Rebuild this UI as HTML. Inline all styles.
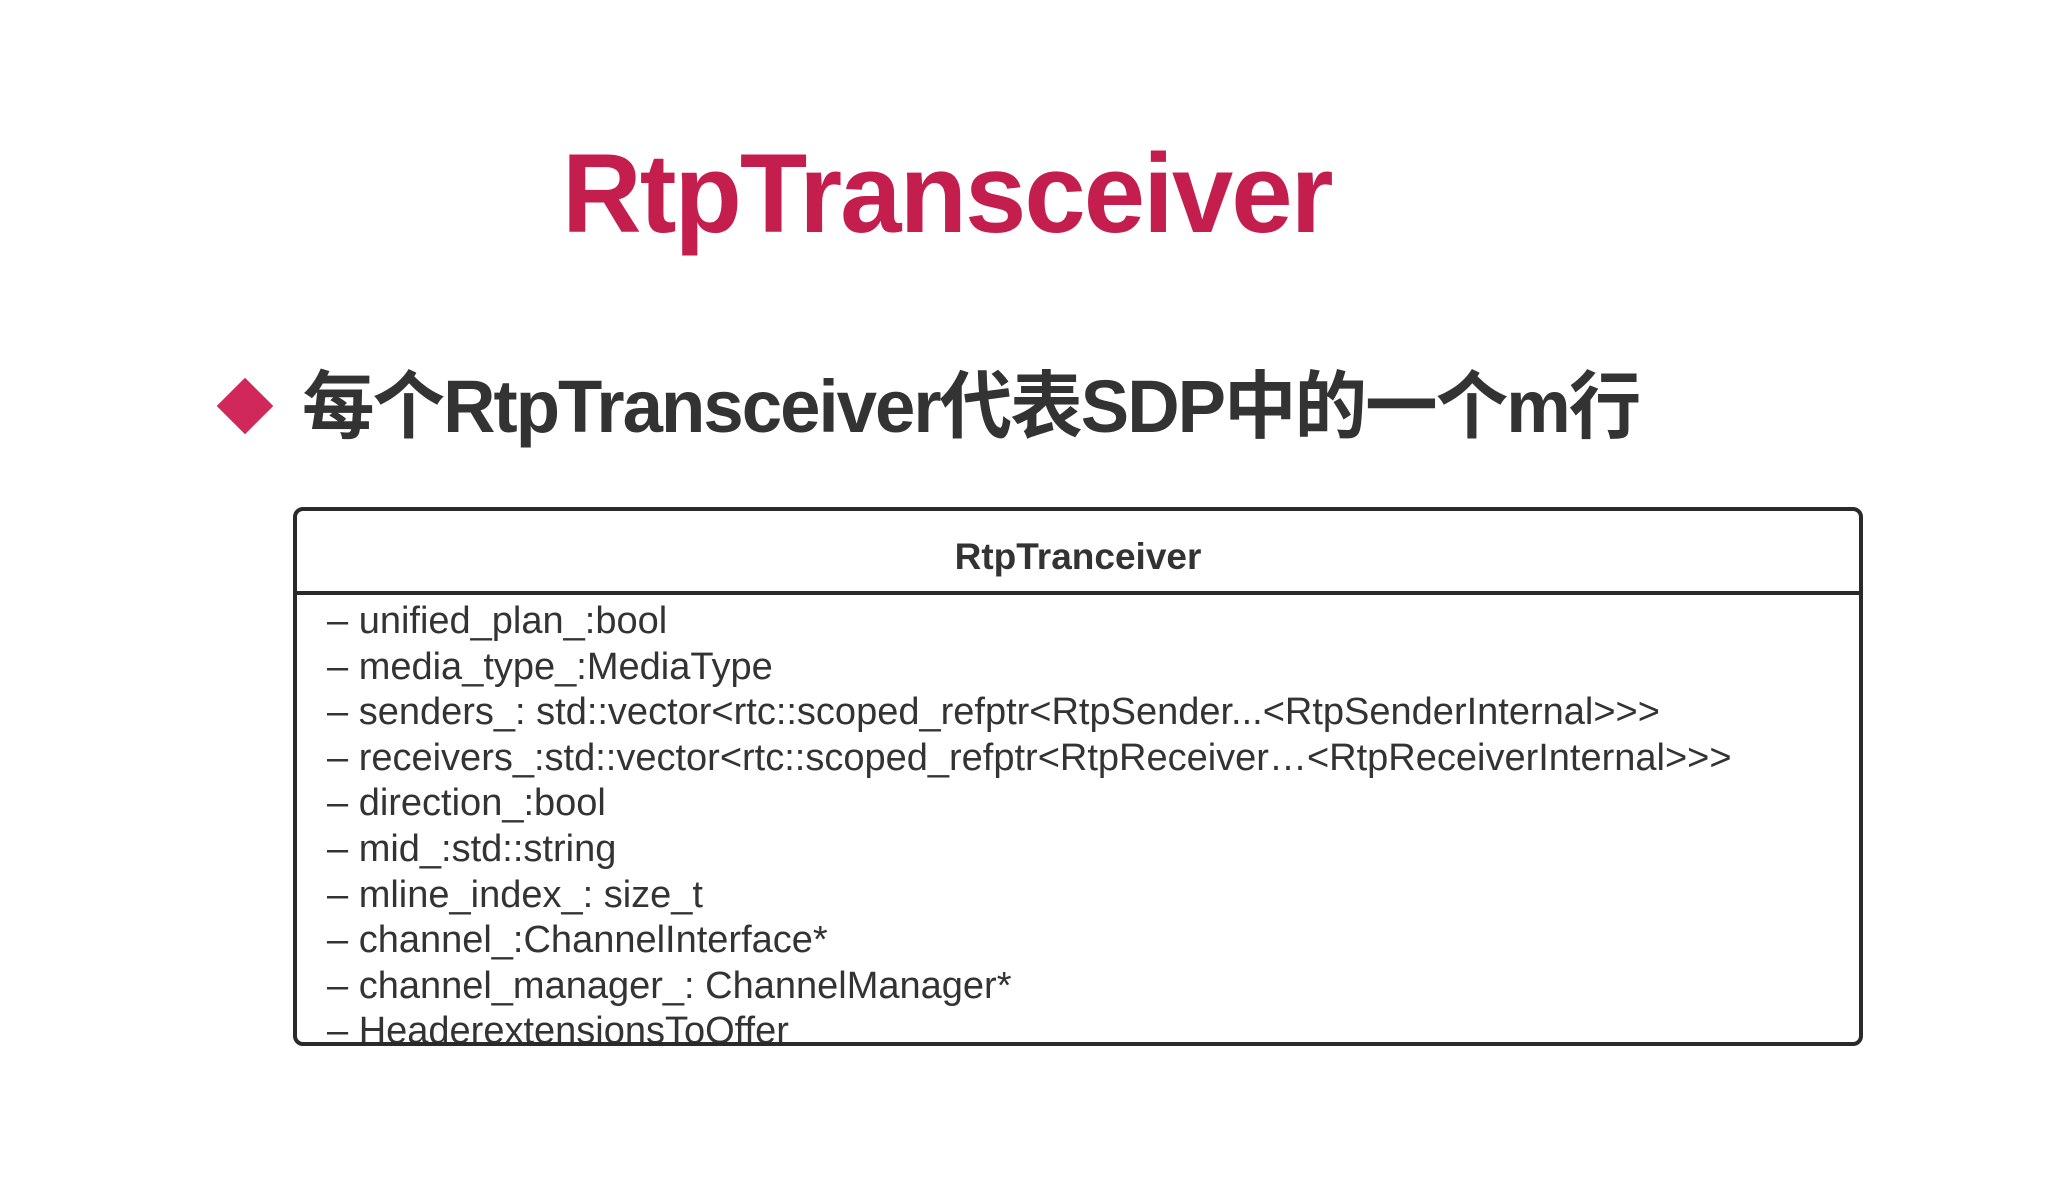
<!DOCTYPE html>
<html><head><meta charset="utf-8"><style>
html,body{margin:0;padding:0;background:#fff;}
body{width:2072px;height:1192px;position:relative;overflow:hidden;font-family:"Liberation Sans","Noto Sans CJK SC",sans-serif;}
.title{position:absolute;left:562px;top:129px;font-size:112px;font-weight:bold;color:#c41e4f;letter-spacing:-2px;white-space:nowrap;transform-origin:left top;transform:scaleX(0.985);}
.diam{position:absolute;left:225px;top:386px;width:40px;height:40px;background:#d0285a;transform:rotate(45deg);}
.sub{position:absolute;left:302px;top:347px;font-size:74px;font-weight:bold;color:#333;white-space:nowrap;letter-spacing:-2px;transform-origin:left top;transform:scaleX(0.98);}
.box{position:absolute;left:293px;top:507px;width:1562px;height:531px;border:4px solid #2a2a2a;border-radius:10px;overflow:hidden;}
.hdr{height:80px;border-bottom:4px solid #2a2a2a;text-align:center;font-size:37px;font-weight:bold;color:#333;line-height:92px;}
.rows{padding:3px 0 0 30px;font-size:38px;color:#333;}
.rows div{height:45.6px;line-height:46px;white-space:nowrap;}
</style></head><body>
<div class="title">RtpTransceiver</div>
<div class="diam"></div>
<div class="sub">每个RtpTransceiver代表SDP中的一个m行</div>
<div class="box">
<div class="hdr">RtpTranceiver</div>
<div class="rows">
<div>– unified_plan_:bool</div>
<div>– media_type_:MediaType</div>
<div>– senders_: std::vector&lt;rtc::scoped_refptr&lt;RtpSender...&lt;RtpSenderInternal&gt;&gt;&gt;</div>
<div>– receivers_:std::vector&lt;rtc::scoped_refptr&lt;RtpReceiver…&lt;RtpReceiverInternal&gt;&gt;&gt;</div>
<div>– direction_:bool</div>
<div>– mid_:std::string</div>
<div>– mline_index_: size_t</div>
<div>– channel_:ChannelInterface*</div>
<div>– channel_manager_: ChannelManager*</div>
<div>– HeaderextensionsToOffer</div>
</div>
</div>
</body></html>
